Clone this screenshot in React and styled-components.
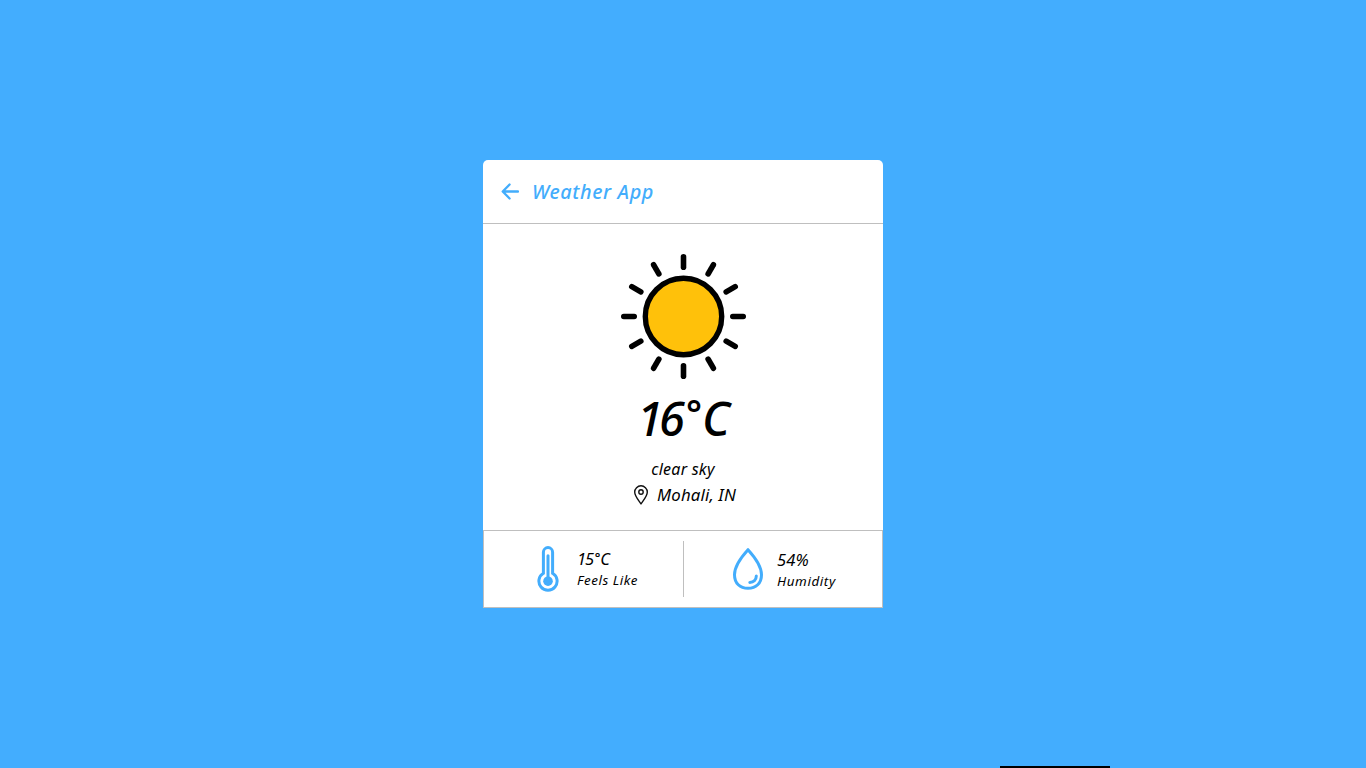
import React from "react";
import styled, { createGlobalStyle } from "styled-components";

const BLUE = "#43adfc";
const LINE = "#bfbfbf";

const GlobalStyle = createGlobalStyle`
  * { box-sizing: border-box; margin: 0; padding: 0; }
  body {
    background: #43adfe;
    font-family: "Noto Sans", "Open Sans", sans-serif;
    font-style: italic;
    color: #000;
    overflow: hidden;
  }
`;

const Page = styled.main`
  height: 100vh;
  display: flex;
  align-items: center;
  justify-content: center;
`;

const Card = styled.section`
  width: 400px;
  height: 448px;
  display: flex;
  flex-direction: column;
  background: #fff;
  border-radius: 5px 5px 0 0;
`;

const Header = styled.header`
  height: 64px;
  display: flex;
  align-items: center;
  padding-left: 18px;
  gap: 13px;
  border-bottom: 1px solid ${LINE};
  color: ${BLUE};
`;

const Text = styled.span`
  display: block;
  white-space: nowrap;
  font-size: ${(p) => p.$size}px;
  line-height: ${(p) => p.$line}px;
  font-weight: ${(p) => p.$weight || 400};
  letter-spacing: ${(p) => p.$track || 0}px;
`;

const Weather = styled.div`
  height: 306px;
  padding-top: 28px;
  display: flex;
  flex-direction: column;
  align-items: center;
`;

const Temperature = styled.div`
  margin-top: 8px;
`;

const Digits = styled.span`
  letter-spacing: -4px;
`;

const Degree = styled.span`
  display: inline-block;
  line-height: 1;
  font-size: 0.8em;
  font-weight: 600;
  letter-spacing: 0;
  margin-left: 0.14em;
  transform: translateY(-0.25em);
`;

const Condition = styled.div`
  margin-top: 12px;
`;

const Place = styled.div`
  margin-top: 2px;
  padding-left: 3px;
  display: flex;
  align-items: center;
  gap: 8px;
`;

const Details = styled.footer`
  height: 78px;
  display: flex;
  border: 1px solid ${LINE};
  padding: 10px 0;
`;

const Detail = styled.div`
  flex: 0 0 ${(p) => p.$width}px;
  display: flex;
  align-items: center;
  padding-left: ${(p) => p.$inset}px;
  gap: ${(p) => p.$gap}px;
  border-left: ${(p) => (p.$divided ? `1px solid ${LINE}` : "0")};
`;

const Values = styled.div`
  padding-top: ${(p) => p.$drop}px;
`;

const BottomBar = styled.div`
  position: absolute;
  left: 1000px;
  bottom: 0;
  width: 110px;
  height: 2px;
  background: #000;
`;

const Arrow = () => (
  <svg width="18" height="18" viewBox="0 0 18 18" fill="none" stroke={BLUE} strokeWidth="2.3" strokeLinecap="round" strokeLinejoin="round">
    <path d="M17 8.5H2M8.6 1.5L1.7 8.5l6.9 7" />
  </svg>
);

const Sun = () => (
  <svg width="130" height="130" viewBox="-65.5 -64.5 130 130">
    <circle r="38.2" fill="#ffc10a" stroke="#000" strokeWidth="5.4" />
    {Array.from({ length: 12 }, (_, i) => (
      <path key={i} d="M0-49.3V-59.7" transform={`rotate(${i * 30})`} stroke="#000" strokeWidth="5.6" strokeLinecap="round" />
    ))}
  </svg>
);

const Pin = () => (
  <svg width="16" height="20" viewBox="0 0 16 20" fill="none" stroke="#111" strokeWidth="1.4" strokeLinejoin="round">
    <path d="M8 18.9C6.2 16.2 1.7 11.4 1.7 7.1a6.3 6.3 0 0 1 12.6 0C14.3 11.4 9.8 16.2 8 18.9Z" />
    <circle cx="8" cy="7" r="2.2" />
  </svg>
);

const Thermometer = () => (
  <svg width="22" height="46" viewBox="0 0 22 46" fill="none" stroke={BLUE} strokeWidth="3" strokeLinecap="round">
    <path d="M6.4 27.3V6.2a4.6 4.6 0 0 1 9.2 0V27.3a9.1 9.1 0 1 1-9.2 0Z" />
    <path d="M11 9.7V34" />
    <circle cx="11" cy="35.2" r="4.8" fill={BLUE} stroke="none" />
  </svg>
);

const Drop = () => (
  <svg width="30" height="44" viewBox="0 0 30 44" fill="none" stroke={BLUE} strokeWidth="3" strokeLinecap="round" strokeLinejoin="round">
    <path d="M15 2.7C11 7.1 1.5 18.2 1.5 27.7 1.5 36.4 7.1 41.3 15 41.3S28.5 36.4 28.5 27.7C28.5 18.2 19 7.1 15 2.7Z" />
    <path d="M23.3 29.1C23.3 33 20.6 35.3 16.8 35.5" />
  </svg>
);

export default function App() {
  return (
    <Page>
      <GlobalStyle />
      <Card>
        <Header>
          <Arrow />
          <Text $size={19.8} $line={30} $weight={500} $track={0.65}>Weather App</Text>
        </Header>
        <Weather>
          <Sun />
          <Temperature>
            <Text $size={47} $line={56} $weight={500} $track={-1}><Digits>16</Digits><Degree>°</Degree>C</Text>
          </Temperature>
          <Condition>
            <Text $size={16} $line={22} $track={0.25}>clear sky</Text>
          </Condition>
          <Place>
            <Pin />
            <Text $size={16.8} $line={26} $track={0.15}>Mohali, IN</Text>
          </Place>
        </Weather>
        <Details>
          <Detail $width={199} $inset={53} $gap={18}>
            <Thermometer />
            <Values $drop={1}>
              <Text $size={16.5} $line={21} $track={-1.2}>15<Degree>°</Degree>C</Text>
              <Text $size={13.4} $line={22} $track={0.55}>Feels Like</Text>
            </Values>
          </Detail>
          <Detail $width={199} $inset={49} $gap={14} $divided>
            <Drop />
            <Values $drop={3}>
              <Text $size={16.5} $line={21} $track={0.2}>54%</Text>
              <Text $size={13.4} $line={22} $track={0.6}>Humidity</Text>
            </Values>
          </Detail>
        </Details>
      </Card>
      <BottomBar />
    </Page>
  );
}
